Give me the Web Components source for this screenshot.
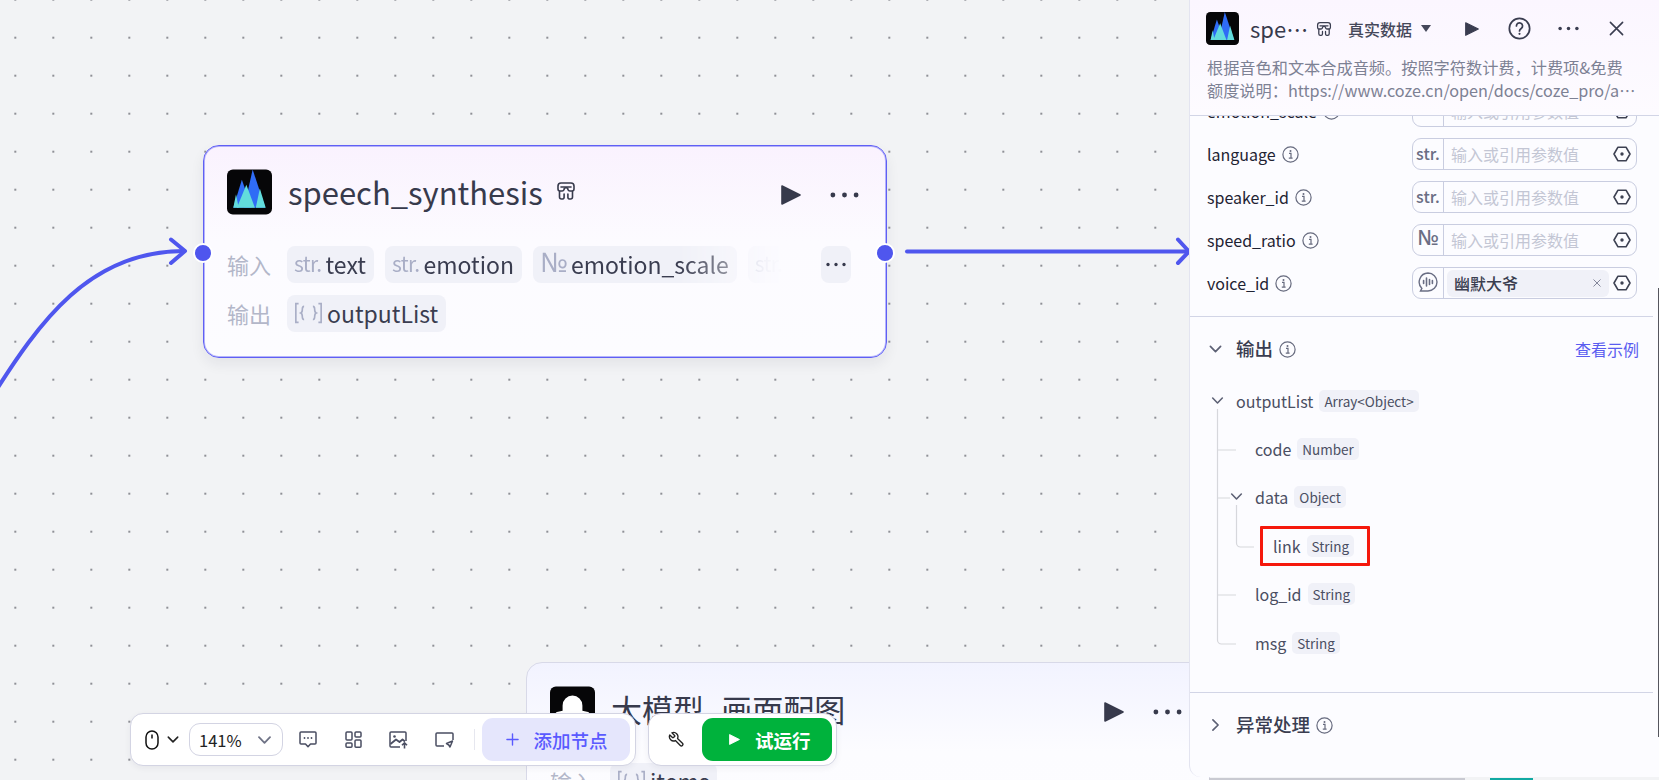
<!DOCTYPE html>
<html lang="zh-CN">
<head>
<meta charset="utf-8">
<title>speech_synthesis</title>
<style>
  html, body { margin: 0; padding: 0; width: 1659px; height: 780px; overflow: hidden; }
  body { font-family: "Noto Sans CJK SC", "Noto Sans", sans-serif; }
</style>
</head>
<body>
<flow-canvas></flow-canvas>

<script>
const icons = {
  speech: `<svg viewBox="0 0 100 100" width="100%" height="100%"><rect width="100" height="100" rx="13" fill="#060608"/>
    <path d="M57 0 L85 85 H38Z" fill="#2f6cf6"/><path d="M33 23 L55 85 H14Z" fill="#2f6cf6"/>
    <path d="M43 34 L62 85 H22Z" fill="#62dcdc"/><path d="M20 55 L26 85 H14Z" fill="#62dcdc"/><path d="M73 42 L86 85 H64Z" fill="#62dcdc"/></svg>`,
  ghost: `<svg viewBox="0 0 100 100" width="100%" height="100%"><rect width="100" height="100" rx="13" fill="#060608"/>
    <path d="M28 54 V42 a22 22 0 0 1 44 0 V54 l10 2 a6 6 0 0 1 6 6 V100 H12 V62 a6 6 0 0 1 6-6Z" fill="#fff"/></svg>`,
  plugin: `<svg viewBox="0 0 20 20" width="100%" height="100%" fill="none" stroke="currentColor" stroke-width="1.6" stroke-linejoin="round" stroke-linecap="round">
    <path d="M2 5a3 3 0 0 1 3-3h10a3 3 0 0 1 3 3v3a2 2 0 0 1-2 2h-2a2 2 0 0 1-2-1.2a2 2 0 0 0-4 0A2 2 0 0 1 6 10H4a2 2 0 0 1-2-2z"/>
    <path d="M3.5 10.5V16a2 2 0 0 0 2 2h1a2 2 0 0 0 1.6-2.2V13M16.5 10.5V16a2 2 0 0 1-2 2h-1a2 2 0 0 1-1.6-2.2V13"/><path d="M5 6h10"/></svg>`,
  play: `<svg viewBox="0 0 20 22" width="100%" height="100%"><path d="M1 2 L19 11 L1 20Z" fill="currentColor" stroke="currentColor" stroke-width="1.6" stroke-linejoin="round"/></svg>`,
  dots: `<svg viewBox="0 0 30 6" width="100%" height="100%"><circle cx="3" cy="3" r="2.5" fill="currentColor"/><circle cx="15" cy="3" r="2.5" fill="currentColor"/><circle cx="27" cy="3" r="2.5" fill="currentColor"/></svg>`,
  info: `<svg viewBox="0 0 17 17" width="17" height="17" fill="none" stroke="currentColor"><circle cx="8.5" cy="8.5" r="7.6" stroke-width="1.2"/><path d="M7 7.4h2v4.6M6.8 12.2h3.8" stroke-width="1.2"/><circle cx="8.5" cy="4.9" r="1" fill="currentColor" stroke="none"/></svg>`,
  hex: `<svg viewBox="0 0 18 16" width="18" height="16" fill="none" stroke="currentColor" stroke-width="1.6" stroke-linejoin="round"><path d="M1 8 L5 1.2 H13 L17 8 L13 14.8 H5Z"/><circle cx="9" cy="8" r="1.7" fill="currentColor" stroke="none"/></svg>`,
  voice: `<svg viewBox="0 0 20 20" width="20" height="20" fill="none" stroke="currentColor" stroke-width="1.4" stroke-linecap="round"><path d="M10 1a9 9 0 1 1 0 18H2.5l1.4-2.6A9 9 0 0 1 10 1Z"/><path d="M5.6 8.5v3M8.5 6v8M11.5 7.5v5M14.4 8.5v3" stroke-width="1.6"/></svg>`,
  chevron: `<svg viewBox="0 0 14 8" width="100%" height="100%" fill="none" stroke="currentColor" stroke-width="1.8" stroke-linecap="round" stroke-linejoin="round"><path d="M1.5 1.2 L7 6.8 L12.5 1.2"/></svg>`,
  close: `<svg viewBox="0 0 16 16" width="100%" height="100%" fill="none" stroke="currentColor" stroke-width="1.7" stroke-linecap="round"><path d="M1.5 1.5 L14.5 14.5 M14.5 1.5 L1.5 14.5"/></svg>`,
  help: `<svg viewBox="0 0 24 24" width="100%" height="100%" fill="none" stroke="currentColor" stroke-width="1.8" stroke-linecap="round"><circle cx="12" cy="12" r="10.6"/><path d="M8.8 9.4a3.2 3.2 0 1 1 5 2.6c-1.1.8-1.8 1.3-1.8 2.6"/><circle cx="12" cy="17.6" r="1.1" fill="currentColor" stroke="none"/></svg>`,
  objectArray: `<svg viewBox="0 0 26 20" width="29" height="22" fill="none" stroke="currentColor" stroke-width="1.5"><path d="M4 1.5H1.5v17H4M22 1.5h2.5v17H22"/><path d="M9 4c-1.6 0-1.6 1-1.6 2.5S7.4 9.4 6 10c1.4.6 1.4 2 1.4 3.5S7.4 16 9 16M17 4c1.6 0 1.6 1 1.6 2.5s0 2.9 1.4 3.5c-1.4.6-1.4 2-1.4 3.5S18.6 16 17 16"/></svg>`,
  mouse: `<svg viewBox="0 0 14 20" width="14" height="20" fill="none" stroke="#111" stroke-width="1.5"><rect x="1" y="1" width="12" height="18" rx="6"/><path d="M7 4.5v4" stroke-width="1.5"/></svg>`,
  comment: `<svg viewBox="0 0 18 17" width="18" height="17" fill="none" stroke="currentColor" stroke-width="1.5" stroke-linejoin="round"><path d="M1 2a1 1 0 0 1 1-1h14a1 1 0 0 1 1 1v10a1 1 0 0 1-1 1h-4.5L9 15.8 6.5 13H2a1 1 0 0 1-1-1z"/><circle cx="5.5" cy="7" r=".9" fill="currentColor" stroke="none"/><circle cx="9" cy="7" r=".9" fill="currentColor" stroke="none"/><circle cx="12.5" cy="7" r=".9" fill="currentColor" stroke="none"/></svg>`,
  layout: `<svg viewBox="0 0 17 17" width="17" height="17" fill="none" stroke="currentColor" stroke-width="1.5"><rect x="1" y="1" width="6" height="8" rx="1"/><rect x="10" y="1" width="6" height="5" rx="1"/><rect x="1" y="12" width="6" height="4.2" rx="1"/><rect x="10" y="9" width="6" height="7.2" rx="1"/></svg>`,
  imageUp: `<svg viewBox="0 0 20 18" width="20" height="18" fill="none" stroke="currentColor" stroke-width="1.5" stroke-linejoin="round"><path d="M11 16H2a1 1 0 0 1-1-1V2a1 1 0 0 1 1-1h14a1 1 0 0 1 1 1v8"/><circle cx="5.5" cy="5.5" r="1.3" fill="currentColor" stroke="none"/><path d="M1.5 13 L7 8.5 L10.5 11 L13.5 8.5 L16 10.5" stroke-width="1.8"/><path d="M15.5 17.5V12M13 14.3 L15.5 11.8 L18 14.3" stroke-width="1.6"/></svg>`,
  cardPen: `<svg viewBox="0 0 19 16" width="19" height="16" fill="none" stroke="currentColor" stroke-width="1.5" stroke-linejoin="round"><path d="M9 14H2a1 1 0 0 1-1-1V2a1 1 0 0 1 1-1h15a1 1 0 0 1 1 1v6"/><path d="M11.5 11.5 L17.5 9 L15 15 L13.8 13Z"/></svg>`,
  plus: `<svg viewBox="0 0 14 14" width="100%" height="100%" fill="none" stroke="currentColor" stroke-width="1.5" stroke-linecap="round"><path d="M7 1v12M1 7h12"/></svg>`,
  wrench: `<svg viewBox="0 0 24 24" width="17" height="17" fill="none" stroke="#222" stroke-width="1.9" stroke-linejoin="round" stroke-linecap="round"><g transform="translate(24 0) scale(-1 1)"><path d="M14.7 6.3a1 1 0 0 0 0 1.4l1.6 1.6a1 1 0 0 0 1.4 0l3.77-3.77a6 6 0 0 1-7.94 7.94l-6.91 6.91a2.12 2.12 0 0 1-3-3l6.91-6.91a6 6 0 0 1 7.94-7.94l-3.76 3.76z"/></g></svg>`
}

const numberMark = (size) => `<span style="font-family:'Noto Sans',sans-serif;font-size:${size}px;line-height:1">№</span>`
const escapeText = (text) => text.replace(/&/g, "&amp;").replace(/</g, "&lt;").replace(/>/g, "&gt;")

/* ---------- small pieces ---------- */

class TypeTag extends HTMLElement {
  constructor() {
    super()
    this.attachShadow({ mode: "open" }).innerHTML = `
      <style>
        :host { display: inline-flex; align-items: center; height: 22px; padding: 0 5px; border-radius: 5px;
          background: #f0f1f8; color: #4a4e62; font-size: 13.5px; white-space: nowrap; }
      </style><slot></slot>`
  }
}
customElements.define("type-tag", TypeTag)

class InfoIcon extends HTMLElement {
  constructor() {
    super()
    this.attachShadow({ mode: "open" }).innerHTML = `
      <style>:host { display: inline-flex; color: #666a7e; flex: none; } svg { display: block; }</style>${icons.info}`
  }
}
customElements.define("info-icon", InfoIcon)

class PortChip extends HTMLElement {
  constructor() {
    super()
    const kind = this.getAttribute("kind")
    const text = kind === "num" ? numberMark(27) : kind
    const mark = kind === "array" ? icons.objectArray : `<span class="mark">${text}</span>`
    this.attachShadow({ mode: "open" }).innerHTML = `
      <style>
        :host { display: inline-flex; align-items: center; gap: 4px; flex: none; box-sizing: border-box; height: 37px; padding: 0 8px 2px 7px; border-radius: 8px;
          background: #f0f1f8; color: #3a3d50; font-size: 23px; white-space: nowrap; }
        .mark { color: #a9aec6; font-size: 21px; letter-spacing: -0.6px; position: relative; top: -1px; }
        svg { color: #a9aec6; flex: none; display: block; }
      </style>${mark}<slot></slot>`
  }
}
customElements.define("port-chip", PortChip)

/* ---------- workflow node on the canvas ---------- */

const nodeStyles = /* css */ `
  :host { display: block; position: absolute; box-sizing: border-box; width: 684px; height: 213px; padding: 23px 23px 0;
    border: 1px solid #5f5ff5; border-radius: 16px; background: linear-gradient(180deg, #faf2fe 0%, #fcfbff 45%, #fcfcff 100%);
    box-shadow: 0 6px 14px rgba(30, 30, 60, 0.07), inset 0 0 0 1px rgba(95, 95, 245, .45); color: #373a4c; }
  :host([tone="plain"]) { border-color: #d8d9e8; background: linear-gradient(180deg, #f2f3ff 0%, #fcfcff 42%, #fdfdff 100%); box-shadow: none; }
  svg { display: block; }
  .head { display: flex; align-items: center; height: 46px; }
  .logo { width: 45px; height: 46px; flex: none; }
  .title { margin-left: 16px; font-size: 31px; line-height: 46px; white-space: nowrap; }
  .plugin { width: 20px; height: 20px; margin-left: 13px; color: #373a4c; position: relative; top: -1px; }
  .tools { margin-left: auto; display: flex; align-items: center; color: #373a4c; position: relative; top: 3px; }
  .play { width: 20px; height: 22px; }
  .more { width: 29px; height: 6px; margin-left: 29px; margin-right: 4px; }
  .row { display: flex; align-items: center; margin-top: 31px; position: relative; }
  .row + .row { margin-top: 12px; }
  .label { width: 60px; flex: none; font-size: 22px; color: #b3b7c9; position: relative; top: -1px; }
  .chips { display: flex; gap: 11px; width: 576px; overflow: hidden; flex: none;
    -webkit-mask-image: linear-gradient(90deg, #000 68%, rgba(0,0,0,.45) 78.5%, rgba(0,0,0,.1) 83%, transparent 86.5%);
    mask-image: linear-gradient(90deg, #000 68%, rgba(0,0,0,.45) 78.5%, rgba(0,0,0,.1) 83%, transparent 86.5%); }
  .chips.plain { -webkit-mask-image: none; mask-image: none; }
  .over { position: absolute; left: 594px; top: 0; width: 30px; height: 37px; border-radius: 8px; background: #f0f1f8;
    display: flex; align-items: center; justify-content: center; color: #373a4c; }
  .over span { width: 20px; height: 5px; display: block; }
  .port { position: absolute; top: 97px; width: 16px; height: 16px; border-radius: 50%; background: #4f56ee; border: 2px solid #fff; box-sizing: content-box; }
  .port.in { left: -11px; }
  .port.out { right: -9px; }
  :host([tone="plain"]) .port { display: none; }
`

class FlowNode extends HTMLElement {
  constructor() {
    super()
    const isFaded = this.hasAttribute("faded")
    this.attachShadow({ mode: "open" }).innerHTML = `
      <style>${nodeStyles}</style>
      <div class="head">
        <div class="logo">${icons[this.getAttribute("logo")]}</div>
        <div class="title">${this.getAttribute("title")}</div>
        ${this.hasAttribute("plugin") ? `<div class="plugin">${icons.plugin}</div>` : ""}
        <div class="tools"><div class="play">${icons.play}</div><div class="more">${icons.dots}</div></div>
      </div>
      <div class="row">
        <div class="label">输入</div>
        <div class="chips ${isFaded ? "" : "plain"}"><slot name="inputs"></slot></div>
        ${isFaded ? `<div class="over"><span>${icons.dots}</span></div>` : ""}
      </div>
      <div class="row">
        <div class="label">输出</div>
        <div class="chips plain"><slot name="outputs"></slot></div>
      </div>
      <div class="port in"></div><div class="port out"></div>`
  }
}
customElements.define("flow-node", FlowNode)

/* ---------- bottom toolbars ---------- */

class FlowToolbar extends HTMLElement {
  constructor() {
    super()
    this.attachShadow({ mode: "open" }).innerHTML = `
      <style>
        :host { display: flex; position: absolute; left: 130px; top: 713px; height: 53px; gap: 12px; font-size: 16px; }
        svg { display: block; flex: none; }
        .bar { display: flex; align-items: center; box-sizing: border-box; height: 53px; background: #fff; border: 1px solid #d3d4e3;
          border-radius: 13px; box-shadow: 0 2px 6px rgba(40, 40, 70, .06); flex: none; }
        .left { width: 506px; padding: 0 5px 0 14px; }
        .right { width: 189px; padding: 0 5px 0 19px; }
        .chev { width: 12px; height: 7px; color: #222; margin-left: 8px; flex: none; }
        .zoom { box-sizing: border-box; width: 94px; height: 33px; margin-left: 10px; display: flex; align-items: center; justify-content: space-between; flex: none;
          padding: 0 10px 0 9px; border: 1px solid #d3d4e3; border-radius: 11px; color: #222; font-size: 16.5px; }
        .zoom i { width: 15px; height: 8px; color: #6f7386; display: block; }
        .tool { width: 24px; height: 24px; display: flex; align-items: center; justify-content: center; color: #4a4e62; margin-left: 21.5px; flex: none; }
        .tool.first { margin-left: 13px; }
        .sep { width: 1px; height: 21px; background: #e6e7ef; margin: 0 7px 0 17px; flex: none; }
        .add { width: 148px; height: 43px; border-radius: 11px; background: #e5e6fc; color: #5a5aff; display: flex; align-items: center; flex: none;
          padding-left: 24px; box-sizing: border-box; font-size: 18.5px; font-weight: 500; }
        .add i { width: 13px; height: 13px; margin-right: 15px; display: block; }
        .run { width: 130px; height: 43px; border-radius: 11px; background: #00b23c; color: #fff; display: flex; align-items: center; box-sizing: border-box; flex: none;
          padding-left: 27px; margin-left: 17px; font-size: 18.5px; font-weight: 700; }
        .run i { width: 11px; height: 13px; margin-right: 15px; display: block; }
      </style>
      <div class="bar left">
        ${icons.mouse}<div class="chev">${icons.chevron}</div>
        <div class="zoom"><span>141%</span><i>${icons.chevron}</i></div>
        <div class="tool first">${icons.comment}</div><div class="tool">${icons.layout}</div>
        <div class="tool">${icons.imageUp}</div><div class="tool">${icons.cardPen}</div>
        <div class="sep"></div>
        <div class="add"><i>${icons.plus}</i>添加节点</div>
      </div>
      <div class="bar right">
        ${icons.wrench}
        <div class="run"><i>${icons.play}</i>试运行</div>
      </div>`
  }
}
customElements.define("flow-toolbar", FlowToolbar)

/* ---------- right panel ---------- */

class ParamRow extends HTMLElement {
  constructor() {
    super()
    const kind = this.getAttribute("kind")
    const mark = kind === "voice" ? icons.voice : kind === "num" ? numberMark(21) : kind
    const value = kind === "voice"
      ? `<div class="chip"><span>${this.getAttribute("value")}</span><i>${icons.close}</i></div>`
      : `<div class="hold">输入或引用参数值</div>`
    this.attachShadow({ mode: "open" }).innerHTML = `
      <style>
        :host { display: flex; align-items: center; height: 32px; margin-bottom: 11px; padding: 0 17px 0 17px; }
        svg { display: block; }
        .name { display: flex; align-items: center; gap: 6px; width: 205px; flex: none; font-size: 16px; color: #1f2333; }
        .box { box-sizing: border-box; width: 225px; height: 32px; display: flex; align-items: center; border: 1px solid #c9cde0; border-radius: 9px; flex: none; }
        .mark { width: 30px; height: 100%; flex: none; display: flex; align-items: center; justify-content: center; border-right: 1px solid #c9cde0;
          color: #6a6e84; font-size: 16px; font-weight: 500; }
        .mark span { position: relative; top: -1px; }
        .hold { margin-left: 7px; font-size: 16px; color: #c3c6d4; width: 157px; flex: none; white-space: nowrap; }
        .chip { box-sizing: border-box; margin-left: 3px; width: 162px; height: 27px; flex: none; border-radius: 6px; background: #f0f1f8; display: flex; align-items: center;
          justify-content: space-between; padding: 0 8px 0 7px; font-size: 16px; font-weight: 500; color: #3a3d50; }
        .chip i { width: 8px; height: 8px; color: #70748a; display: block; }
        .hex { margin-left: 5px; display: flex; color: #3d4152; flex: none; }
        .chip + .hex { margin-left: 4px; }
      </style>
      <div class="name">${this.getAttribute("name")}<info-icon></info-icon></div>
      <div class="box"><div class="mark"><span>${mark}</span></div>${value}<div class="hex">${icons.hex}</div></div>`
  }
}
customElements.define("param-row", ParamRow)

class TreeRow extends HTMLElement {
  constructor() {
    super()
    const marked = this.hasAttribute("marked")
    this.attachShadow({ mode: "open" }).innerHTML = `
      <style>
        :host { display: flex; align-items: center; height: 48.4px; font-size: 16px; color: #4a4e62; position: relative; }
        svg { display: block; }
        .in { display: inline-flex; align-items: center; gap: 6px; position: relative; }
        .chev { position: absolute; left: -25.5px; top: 50%; width: 13px; height: 7px; margin-top: -4px; color: #5c6074; }
        .mark { position: absolute; left: -13.5px; right: -15.5px; top: -8px; bottom: -8px; border: 3px solid #f5180c; border-radius: 1px; }
      </style>
      <div class="in" style="margin-left:${this.getAttribute("indent")}px">
        ${this.hasAttribute("open") ? `<div class="chev">${icons.chevron}</div>` : ""}
        <span>${this.getAttribute("name")}</span><type-tag>${escapeText(this.getAttribute("type"))}</type-tag>
        ${marked ? `<div class="mark"></div>` : ""}
      </div>`
  }
}
customElements.define("tree-row", TreeRow)

const panelStyles = /* css */ `
  :host { display: flex; flex-direction: column; position: absolute; left: 1189px; top: 0; width: 470px; height: 777px; box-sizing: border-box;
    background: #fcfcff; border-left: 1px solid #e3e4f0; border-radius: 0 0 0 12px; overflow: hidden; font-size: 16px; color: #3a3d50; }
  svg { display: block; }
  header { flex: none; box-sizing: border-box; height: 116px; padding: 12px 17px 0 16px; border-bottom: 1px solid #d2d5e6;
    background: linear-gradient(180deg, #fbf6ff 0%, #fdfbff 100%); }
  .top { display: flex; align-items: center; height: 33px; }
  .logo { width: 33px; height: 33px; flex: none; }
  .name { width: 60px; margin-left: 11px; font-size: 22px; line-height: 33px; white-space: nowrap; overflow: hidden; text-overflow: ellipsis; flex: none; color: #373a4c; }
  .plugin { width: 16px; height: 16px; margin-left: 6px; flex: none; color: #3a3d50; }
  .mode { margin-left: 16px; font-weight: 500; flex: none; color: #45485a; }
  .caret { width: 0; height: 0; margin-left: 9px; border: 5px solid transparent; border-top: 7px solid #45485a; border-bottom: 0; flex: none; }
  .run { width: 14px; height: 16px; margin-left: 34px; color: #3a3d50; flex: none; }
  .help { width: 23px; height: 23px; margin-left: 29px; color: #3a3d50; flex: none; }
  .more { width: 21px; height: 5px; margin-left: 27px; color: #3a3d50; flex: none; }
  .close { width: 15px; height: 15px; margin-left: 30px; color: #3a3d50; flex: none; }
  .desc { margin: 11px 0 0 1px; width: 430px; font-size: 16.2px; line-height: 23px; color: #7d8194; }
  .desc div { white-space: nowrap; overflow: hidden; text-overflow: ellipsis; }
  .body { flex: 1; overflow: hidden; }
  .params { margin-top: -21px; padding-bottom: 6px; border-bottom: 1px solid #d2d5e6; width: 463px; }
  .sec { display: flex; align-items: center; height: 64px; padding: 0 14px 0 19px; width: 463px; box-sizing: border-box; }
  .sec .arrow { width: 13px; height: 8px; color: #5c6074; flex: none; }
  .sec .arrow.right { transform: rotate(-90deg); }
  .sec h3 { margin: 0 6px 0 14px; font-size: 18.5px; font-weight: 500; color: #3a3d50; position: relative; top: -1px; }
  .sec a { margin-left: auto; color: #5a5df0; font-size: 16px; }
  .tree { position: relative; margin-top: -4.5px; height: 291.5px; padding-bottom: 24px; width: 463px; border-bottom: 1px solid #d2d5e6; }
  .lines { position: absolute; left: 0; top: 0; }
`

class SidePanel extends HTMLElement {
  constructor() {
    super()
    this.attachShadow({ mode: "open" }).innerHTML = `
      <style>${panelStyles}</style>
      <header>
        <div class="top">
          <div class="logo">${icons.speech}</div>
          <div class="name">speech_synthesis</div>
          <div class="plugin">${icons.plugin}</div>
          <div class="mode">真实数据</div><div class="caret"></div>
          <div class="run">${icons.play}</div>
          <div class="help">${icons.help}</div>
          <div class="more">${icons.dots}</div>
          <div class="close">${icons.close}</div>
        </div>
        <div class="desc">
          <div>根据音色和文本合成音频。按照字符数计费，计费项&amp;免费</div>
          <div>额度说明：https://www.coze.cn/open/docs/coze_pro/api_reference</div>
        </div>
      </header>
      <div class="body">
        <div class="params">
          <param-row name="emotion_scale" kind="num"></param-row>
          <param-row name="language" kind="str."></param-row>
          <param-row name="speaker_id" kind="str."></param-row>
          <param-row name="speed_ratio" kind="num"></param-row>
          <param-row name="voice_id" kind="voice" value="幽默大爷"></param-row>
        </div>
        <div class="sec">
          <div class="arrow">${icons.chevron}</div><h3>输出</h3><info-icon></info-icon><a>查看示例</a>
        </div>
        <div class="tree">
          <svg class="lines" width="120" height="290" fill="none" stroke="#d6d7dc" stroke-width="1.2">
            <path d="M27.5 32 V263 a4 4 0 0 0 4 4 H46"/>
            <path d="M27.5 73H46M27.5 121H40M27.5 218H46"/>
            <path d="M46.5 128 V166 a4 4 0 0 0 4 4 H64"/>
          </svg>
          <tree-row indent="46" name="outputList" type="Array<Object>" open></tree-row>
          <tree-row indent="65" name="code" type="Number"></tree-row>
          <tree-row indent="65" name="data" type="Object" open></tree-row>
          <tree-row indent="83" name="link" type="String" marked></tree-row>
          <tree-row indent="65" name="log_id" type="String"></tree-row>
          <tree-row indent="65" name="msg" type="String"></tree-row>
        </div>
        <div class="sec">
          <div class="arrow right">${icons.chevron}</div><h3>异常处理</h3><info-icon></info-icon>
        </div>
      </div>`
  }
}
customElements.define("side-panel", SidePanel)

/* ---------- canvas ---------- */

class FlowCanvas extends HTMLElement {
  constructor() {
    super()
    this.attachShadow({ mode: "open" }).innerHTML = `
      <style>
        :host { display: block; position: relative; width: 1659px; height: 780px; overflow: hidden; background-color: #f2f3f5;
          background-image: radial-gradient(circle at center, #8f9096 0, #8f9096 1px, transparent 1.4px);
          background-size: 38px 38px; background-position: -3.7px 18.7px; }
        .edges { position: absolute; left: 0; top: 0; }
        .first { left: 203px; top: 145px; }
        .second { left: 526px; top: 662px; }
        .rest { position: absolute; top: 778px; height: 2px; }
        .scroll { position: absolute; left: 1658px; top: 288px; width: 1px; height: 449px; background: #55565e; }
      </style>
      <svg class="edges" width="1659" height="780" fill="none" stroke="#4f56ee" stroke-width="4" stroke-linecap="round" stroke-linejoin="round">
        <path d="M-10 400 C40 320 90 251 184 251"/>
        <path d="M171 239.5 L185 251 L171 263"/>
        <path d="M907 251.5 H1188"/>
        <path d="M1178 239.5 L1189 251.5 L1178 263"/>
      </svg>
      <flow-node class="second" tone="plain" logo="ghost" title="大模型_画面配图">
        <port-chip slot="inputs" kind="array">items</port-chip>
      </flow-node>
      <flow-node class="first" logo="speech" title="speech_synthesis" plugin faded>
        <port-chip slot="inputs" kind="str.">text</port-chip>
        <port-chip slot="inputs" kind="str.">emotion</port-chip>
        <port-chip slot="inputs" kind="num">emotion_scale</port-chip>
        <port-chip slot="inputs" kind="str.">language</port-chip>
        <port-chip slot="outputs" kind="array">outputList</port-chip>
      </flow-node>
      <flow-toolbar></flow-toolbar>
      <div class="rest" style="left:1209px;width:256px;background:#c9cad2"></div>
      <div class="rest" style="left:1490px;width:43px;background:#11a9a3"></div>
      <side-panel></side-panel>
      <div class="scroll"></div>`
  }
}
customElements.define("flow-canvas", FlowCanvas)
</script>
</body>
</html>
